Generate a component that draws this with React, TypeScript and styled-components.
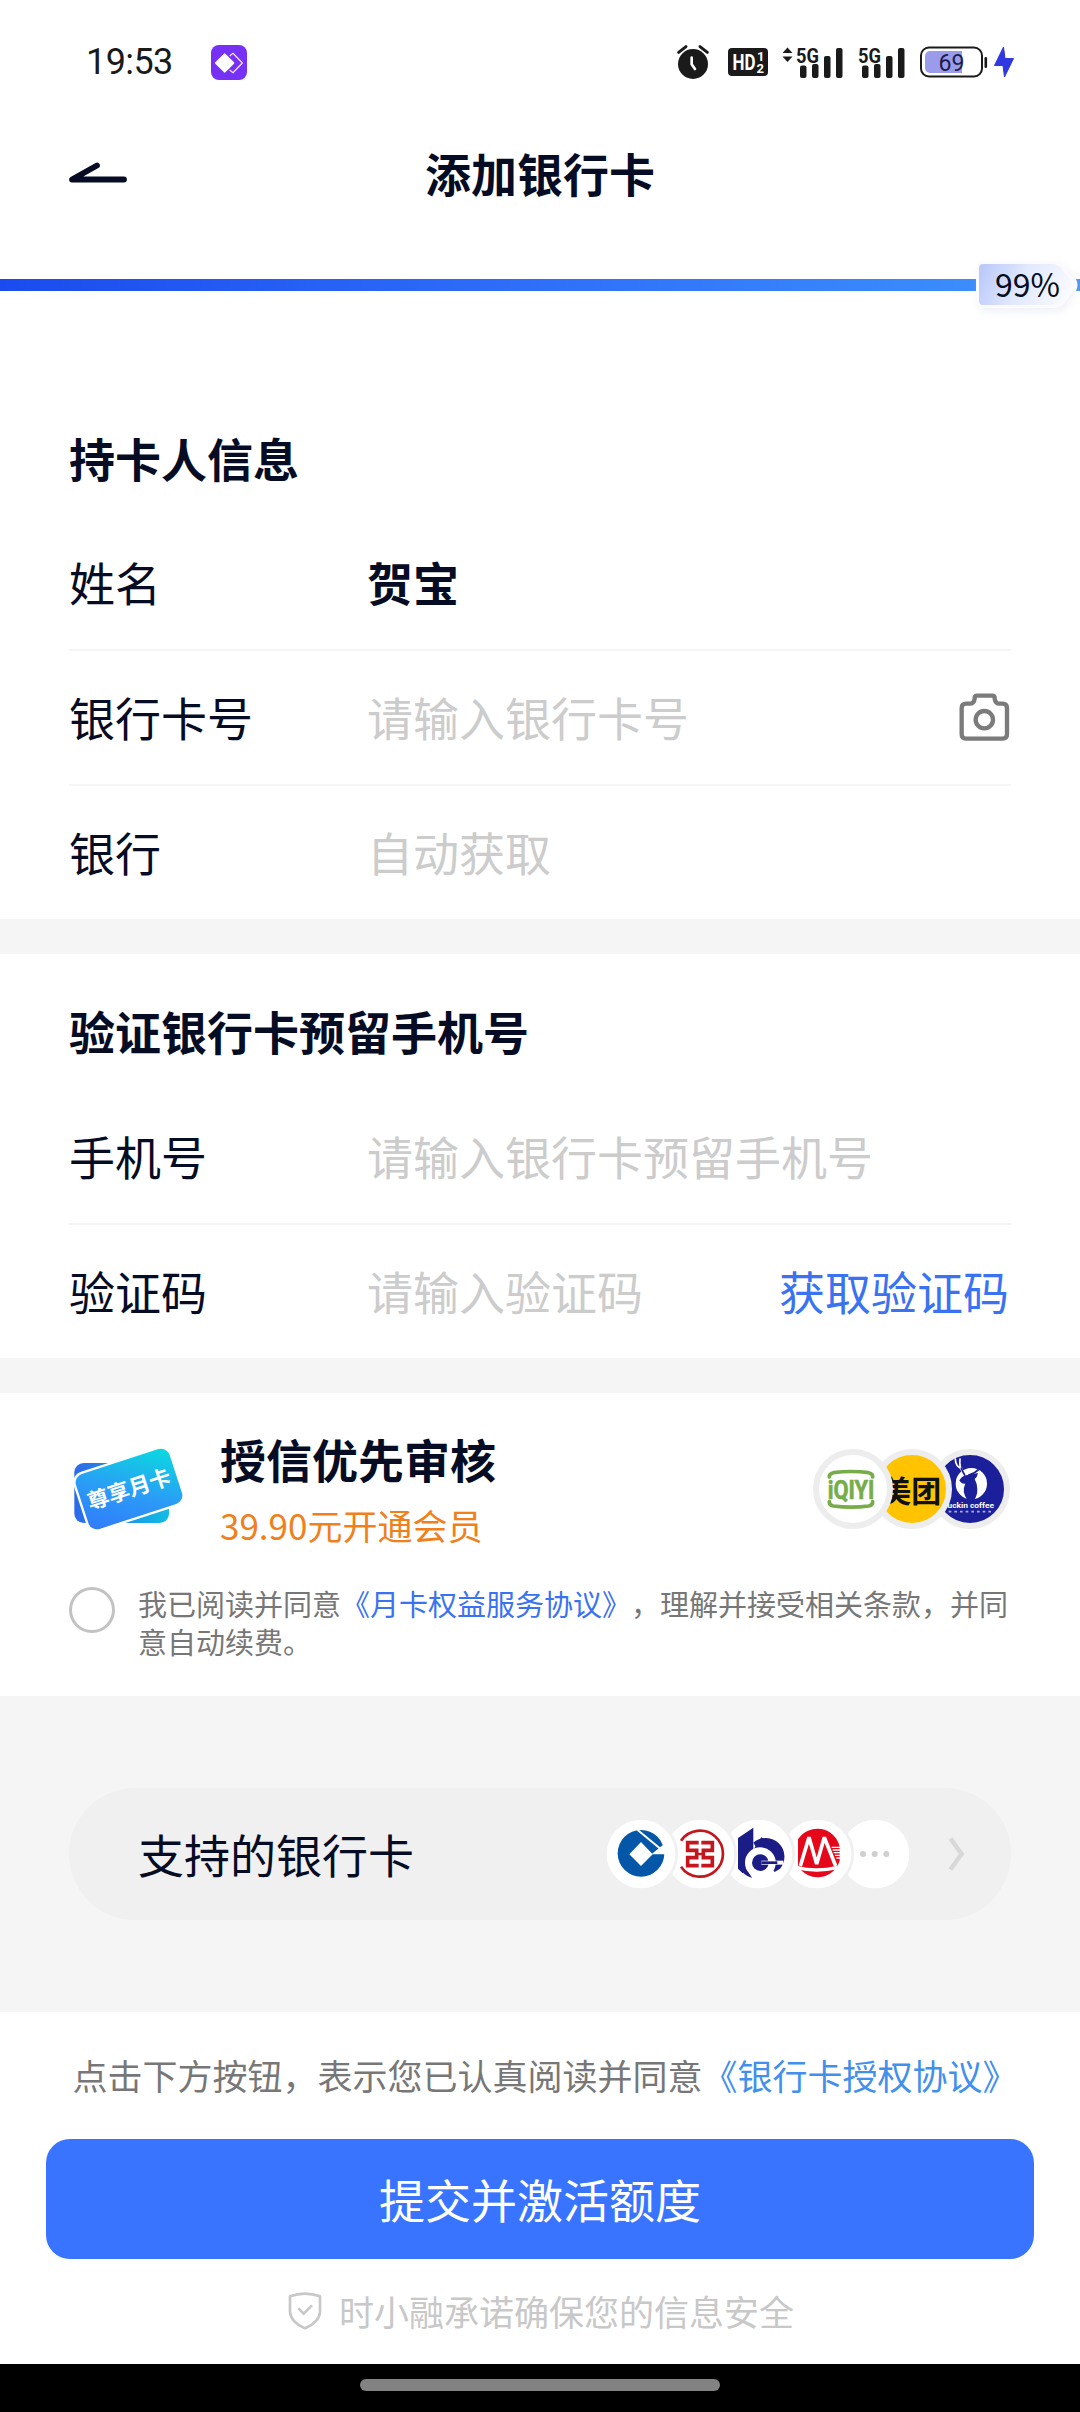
import React from 'react';
import styled, { createGlobalStyle } from 'styled-components';

const GlobalStyle = createGlobalStyle`
  * { box-sizing: border-box; }
  body {
    margin: 0;
    background: #fff;
    color: #060c24;
    font-family: "Noto Sans CJK SC", "Noto Sans", sans-serif;
    text-spacing-trim: space-all;
  }
  svg { display: block; flex: none; overflow: visible; }
`;

const Screen = styled.div`
  width: 1080px;
  height: 2412px;
  display: flex;
  flex-direction: column;
  overflow: hidden;
  background: #fff;
`;

const StatusBar = styled.header`
  height: 124px;
  flex: none;
  display: flex;
  align-items: center;
  justify-content: space-between;
  padding: 0 66px 0 86px;
`;

const StatusLeft = styled.div`
  display: flex;
  align-items: center;
`;

const Clock = styled.span`
  width: 125px;
  font: 400 36px/40px Roboto, sans-serif;
  letter-spacing: -0.6px;
  color: #1a1a1a;
`;

const StatusIcons = styled.div`
  display: flex;
  align-items: center;
`;

const Gap = styled.span<{ $w: number }>`
  width: ${(p) => p.$w}px;
`;

const TitleBar = styled.div`
  height: 97px;
  flex: none;
  display: grid;
  grid-template-columns: 200px 1fr 200px;
  align-items: center;
`;

const BackButton = styled.button`
  border: 0;
  background: none;
  padding: 0 0 0 69px;
`;

const PageTitle = styled.h1`
  margin: 0;
  padding-bottom: 1px;
  text-align: center;
  font-size: 46px;
  line-height: 60px;
  font-weight: 700;
`;

const ProgressArea = styled.div`
  height: 128px;
  flex: none;
  display: flex;
  align-items: center;
`;

const ProgressBar = styled.div`
  width: 976px;
  height: 12px;
  flex: none;
  background: linear-gradient(90deg, #1b4bee 0%, #2d6cf8 50%, #3b8dff 100%);
`;

const ProgressBadge = styled.div`
  width: 104px;
  height: 60px;
  flex: none;
  display: grid;

  > * { grid-area: 1 / 1; }
`;

const ProgressValue = styled.span`
  z-index: 1;
  padding: 0 0 4px 19px;
  align-self: center;
  font-size: 32px;
  line-height: 44px;
`;

const Section = styled.section<{ $top: number; $h: number; $gapAfter?: number }>`
  height: ${(p) => p.$h}px;
  flex: none;
  padding: ${(p) => p.$top}px 69px 0;
  box-sizing: content-box;
  width: 942px;
  border-bottom: ${(p) => p.$gapAfter ?? 0}px solid #f5f5f5;
`;

const SectionTitle = styled.h2<{ $mb?: number }>`
  margin: 0 0 ${(p) => p.$mb ?? 0}px;
  font-size: 46px;
  line-height: 60px;
  font-weight: 700;
`;

const Row = styled.div<{ $last?: boolean }>`
  height: ${(p) => (p.$last ? 133 : 135)}px;
  display: flex;
  align-items: center;
  padding-bottom: 3px;
  border-bottom: ${(p) => (p.$last ? 0 : 2)}px solid #f5f5f5;
  font-size: 46px;
  line-height: 60px;
`;

const Label = styled.span`
  width: 298px;
  flex: none;
`;

const Value = styled.span<{ $placeholder?: boolean }>`
  flex: 1;
  white-space: nowrap;
  color: ${(p) => (p.$placeholder ? '#cccccc' : '#060c24')};
  font-weight: ${(p) => (p.$placeholder ? 400 : 700)};
`;

const CodeLink = styled.span`
  margin-right: 2px;
  color: #3b72f2;
  white-space: nowrap;
`;

const MemberRow = styled.div`
  height: 122px;
  display: flex;
  align-items: center;
  padding: 0 1px 0 4px;
`;

const MemberText = styled.div`
  flex: 1;
  padding-left: 35px;
`;

const Price = styled.div`
  margin-top: 12px;
  font-size: 35px;
  line-height: 50px;
  color: #f07f1c;
`;

const BadgeStack = styled.div<{ $overlap: number }>`
  display: flex;
  flex-direction: row-reverse;
  flex: none;

  > * + * { margin-right: ${(p) => -p.$overlap}px; }
  > * { position: relative; }
`;

const AgreeRow = styled.div`
  display: flex;
  align-items: flex-start;
  margin-top: 34px;
`;

const Radio = styled.span`
  width: 46px;
  height: 46px;
  flex: none;
  margin: 3px 23px 0 0;
  border: 3px solid #c2c2c2;
  border-radius: 50%;
`;

const AgreeText = styled.p`
  margin: 0;
  width: 873px;
  font-size: 29px;
  line-height: 38px;
  color: #777;
`;

const Link = styled.span<{ $color: string }>`
  color: ${(p) => p.$color};
`;

const BankArea = styled.section`
  height: 316px;
  flex: none;
  padding: 92px 69px;
  background: #f5f5f5;
`;

const BankPill = styled.div`
  height: 132px;
  display: flex;
  align-items: center;
  padding: 0 44px 0 69px;
  border-radius: 66px;
  background: #f0f0f0;
  font-size: 46px;
  line-height: 60px;
`;

const BankLabel = styled.span`
  flex: 1;
  padding-bottom: 2px;
`;

const Footer = styled.footer`
  height: 352px;
  flex: none;
  padding: 38px 46px 0;
  display: flex;
  flex-direction: column;
`;

const FooterNote = styled.p`
  margin: 0;
  padding-left: 10px;
  text-align: center;
  white-space: nowrap;
  font-size: 35px;
  line-height: 50px;
  color: #777;
`;

const SubmitButton = styled.button`
  margin-top: 39px;
  height: 120px;
  flex: none;
  border: 0;
  border-radius: 24px;
  padding: 0 0 2px;
  background: #3874ff;
  color: #fff;
  font-family: inherit;
  font-size: 46px;
  line-height: 60px;
`;

const SafetyNote = styled.div`
  margin-top: 27px;
  padding-left: 2px;
  display: flex;
  align-items: center;
  justify-content: center;
  gap: 17px;
  font-size: 35px;
  line-height: 50px;
  color: #c8c8c8;
`;

const NavBar = styled.div`
  height: 48px;
  flex: none;
  padding-top: 15px;
  background: #000;
`;

const NavHandle = styled.div`
  width: 360px;
  height: 12px;
  margin: 0 auto;
  border-radius: 6px;
  background: #828282;
`;

const INK = '#1a1a1a';
const CJK = '"Noto Sans CJK SC", sans-serif';

const AppBadge = () => (
  <svg width="36" height="35" viewBox="0 0 108 105">
    <rect width="108" height="105" rx="24" fill="#7731f5" />
    <path d="M56 33l10-8 28 29-28 29-10-8" fill="none" stroke="#f3dcff" strokeWidth="4" strokeLinejoin="round" />
    <path d="M41 28l26 26-26 26-26-26z" fill="#fff" stroke="#fff" strokeWidth="6" strokeLinejoin="round" />
  </svg>
);

const AlarmIcon = () => (
  <svg width="32" height="36" viewBox="0 0 96 108">
    <circle cx="48" cy="60" r="45" fill={INK} />
    <path d="M5 25L27 8M69 8l22 17" stroke={INK} strokeWidth="9" strokeLinecap="round" />
    <path d="M44 41v20l10 14" fill="none" stroke="#fff" strokeWidth="8" strokeLinecap="round" />
  </svg>
);

const HdIcon = () => (
  <svg width="40" height="28" viewBox="0 0 40 28">
    <rect width="40" height="28" rx="4" fill={INK} />
    <text x="4.5" y="22" fontFamily="Roboto, sans-serif" fontWeight="700" fontSize="22" textLength="23" lengthAdjust="spacingAndGlyphs" fill="#fff">HD</text>
    <text x="29" y="13" fontFamily="Roboto, sans-serif" fontWeight="700" fontSize="13" fill="#fff">1</text>
    <text x="28.5" y="25" fontFamily="Roboto, sans-serif" fontWeight="700" fontSize="13" fill="#fff">2</text>
  </svg>
);

const SignalIcon = ({ arrows }: { arrows?: boolean }) => (
  <svg width={arrows ? 61 : 47} height="38" viewBox={arrows ? '-14 -4 61 38' : '0 -4 47 38'}>
    {arrows && <path d="M-13.500 6l5-5.500 5 5.500zM-13.500 9.500h10l-5 5.500z" fill={INK} />}
    <text x="0" y="15.500" fontFamily="Roboto, sans-serif" fontWeight="700" fontSize="21" textLength="23" lengthAdjust="spacingAndGlyphs" fill={INK}>5G</text>
    <rect x="4" y="18.500" width="6.500" height="12.500" rx="2" fill={INK} />
    <rect x="16" y="17" width="6.500" height="14" rx="2" fill={INK} />
    <rect x="28" y="9" width="6.500" height="22" rx="2" fill={INK} />
    <rect x="40" y="1" width="6.500" height="30" rx="2" fill={INK} />
  </svg>
);

const BatteryIcon = () => (
  <svg width="68" height="32" viewBox="0 0 68 32">
    <rect x="1" y="1.500" width="61" height="29" rx="8" fill="none" stroke={INK} strokeWidth="2" />
    <path d="M10 5H42V27H10a5 5 0 0 1-5-5V10a5 5 0 0 1 5-5z" fill="#9b9bec" />
    <rect x="64.500" y="11" width="2.600" height="11" rx="1.300" fill={INK} />
    <text x="18.500" y="25" fontFamily="Roboto, sans-serif" fontSize="24.500" textLength="26" lengthAdjust="spacingAndGlyphs" fill="#1d1d4a">69</text>
  </svg>
);

const BoltIcon = () => (
  <svg width="20" height="32" viewBox="0 0 20 32">
    <path d="M9.500 1L0.500 19.500H9L10.500 31 19.500 12.500H11z" fill="#3038e2" stroke="#3038e2" strokeLinejoin="round" />
  </svg>
);

const BackArrow = () => (
  <svg width="58" height="20" viewBox="0 0 58 20">
    <path d="M55 16.500H3L28 2.500" fill="none" stroke="#060c24" strokeWidth="5.800" strokeLinecap="round" strokeLinejoin="round" />
  </svg>
);

const BadgeShape = () => (
  <svg width="104" height="60" viewBox="0 0 104 60">
    <defs>
      <linearGradient id="badge" x1="0" y1="0.300" x2="1" y2="0.500">
        <stop offset="0" stopColor="#bccafa" />
        <stop offset="0.450" stopColor="#e0e8fc" />
        <stop offset="1" stopColor="#f9faff" />
      </linearGradient>
      <filter id="soft" x="-20%" y="-30%" width="140%" height="180%">
        <feGaussianBlur stdDeviation="5" />
      </filter>
    </defs>
    <path d="M4 12H82q5 0 8 4L102 30 90 50q-2 5-8 5H4z" fill="#b9c2dd" opacity="0.300" filter="url(#soft)" />
    <path d="M6 6H78q6 0 10 4L99 26q3 4 0 8L88 49q-4 4-10 4H6q-5 0-5-5V11q0-5 5-5z" fill="#fbfbff" />
    <path d="M7 9H76q5 0 9 4l11 14q2 2 0 4L85 46q-4 4-9 4H7q-4 0-4-4V13q0-4 4-4z" fill="url(#badge)" />
    <path d="M100 24h4v12h-4q3-6 0-12z" fill="#4f9aec" />
  </svg>
);

const CameraIcon = () => (
  <svg width="52" height="48" viewBox="0 0 156 144">
    <path
      d="M47 18q0-7 7-7h46q7 0 7 7v2q2 15 15 15h9q13 0 13 13v79q0 13-13 13H21q-13 0-13-13V48q0-13 13-13h11q13 0 15-15z"
      fill="none" stroke="#7b7b7b" strokeWidth="13" strokeLinejoin="round"
    />
    <circle cx="76" cy="83" r="26" fill="none" stroke="#7b7b7b" strokeWidth="13" />
  </svg>
);

const MonthCardIcon = () => (
  <svg width="112" height="84" viewBox="70 110 336 252">
    <defs>
      <linearGradient id="front" x1="0" y1="1" x2="1" y2="0">
        <stop offset="0" stopColor="#3278fb" />
        <stop offset="0.450" stopColor="#2b9bf6" />
        <stop offset="1" stopColor="#08dfdd" />
      </linearGradient>
      <linearGradient id="back" x1="0" y1="0" x2="1" y2="0">
        <stop offset="0" stopColor="#2d6ae8" />
        <stop offset="1" stopColor="#10bce4" />
      </linearGradient>
    </defs>
    <rect x="74" y="158" width="284" height="180" rx="28" fill="url(#back)" />
    <g transform="rotate(-18 238 236)">
      <rect x="87" y="146" width="302" height="180" rx="30" fill="url(#front)" stroke="#fff" strokeWidth="7" />
      <text x="238" y="260" textAnchor="middle" fontFamily={CJK} fontWeight="700" fontSize="65" fill="#fff">尊享月卡</text>
    </g>
  </svg>
);

const IqiyiBadge = () => (
  <svg width="80" height="80" viewBox="0 0 240 240">
    <circle cx="120" cy="120" r="111" fill="#fff" stroke="#ededed" strokeWidth="18" />
    <g fill="none" stroke="#77ad49" strokeWidth="11" strokeLinecap="round">
      <path d="M49 84q-1-10 12-13 55-7 106 0 13 3 12 13" />
      <path d="M49 158q-1 10 12 13 55 7 106 0 13-3 12-13" />
    </g>
    <text x="44" y="149" fontFamily="Roboto, sans-serif" fontWeight="700" fontSize="76" textLength="140" lengthAdjust="spacingAndGlyphs" fill="#77ad49" stroke="#77ad49" strokeWidth="2">iQIYI</text>
  </svg>
);

const MeituanBadge = () => (
  <svg width="80" height="80" viewBox="0 0 240 240">
    <circle cx="120" cy="120" r="111" fill="#ffc300" stroke="#ededed" strokeWidth="18" />
    <text x="28" y="160" fontFamily={CJK} fontWeight="700" fontSize="90" fill="#111">美团</text>
  </svg>
);

const LuckinBadge = () => (
  <svg width="80" height="80" viewBox="0 0 240 240">
    <circle cx="120" cy="120" r="111" fill="#1b1f99" stroke="#ededed" strokeWidth="18" />
    <circle cx="124" cy="104" r="47" fill="#fff" />
    <path d="M88 94Q98 78 114 78L144 72Q142 84 134 90 142 104 142 122 142 140 132 153L112 152Q94 128 106 104 94 106 88 94z" fill="#1b1f99" />
    <path d="M104 78Q86 58 90 30M96 60Q76 52 76 30" fill="none" stroke="#fff" strokeWidth="5" strokeLinecap="round" />
    <path d="M104 78Q98 68 94 58M116 78Q136 72 150 58" fill="none" stroke="#1b1f99" strokeWidth="5" strokeLinecap="round" />
    <text x="46" y="177" fontFamily="Roboto, sans-serif" fontWeight="700" fontSize="24" textLength="146" lengthAdjust="spacingAndGlyphs" fill="#fff">luckin coffee</text>
    <path d="M56 188H190" stroke="#a9addf" strokeWidth="5" strokeDasharray="8 9" />
  </svg>
);

const BankDisc = ({ children }: { children?: React.ReactNode }) => (
  <svg width="74" height="74" viewBox="-111 -111 222 222">
    <circle r="107" fill="#fff" stroke="#f0f0f0" strokeWidth="8" />
    {children}
  </svg>
);

const CcbLogo = () => (
  <BankDisc>
    <circle cx="0" cy="-2" r="70" fill="#0457a8" />
    <path d="M-35 1L0-36 35 1 0 36z" fill="#fff" />
    <path d="M33-1L74-34V1H34z" fill="#fff" />
    <path d="M-10-72L58-16" stroke="#fff" strokeWidth="6" />
  </BankDisc>
);

const IcbcLogo = () => (
  <BankDisc>
    <path d="M-57-40A69 69 0 1 1-57 38" fill="none" stroke="#c5161d" strokeWidth="8" />
    <g fill="none" stroke="#c5161d" strokeWidth="11">
      <path d="M-4-34H-37V-11H-10V11H-37V35H-4" />
      <path d="M4-34H37V-11H10V11H37V35H4" />
      <path d="M-10 0H10" strokeWidth="7" />
    </g>
  </BankDisc>
);

const BocomLogo = () => (
  <BankDisc>
    <path d="M-60-48L-14-79V10L-46 58-60 44z" fill="#1c1c86" />
    <path d="M-58 38Q-44 64-18 72L-34 44z" fill="#1c1c86" />
    <path d="M-14-34A56 56 0 0 1 66 44L50 54 20 20z" fill="#1c1c86" />
    <path d="M-16-10L10-50 40-30V10z" fill="#1c1c86" />
    <circle cx="7" cy="26" r="46" fill="#fff" />
    <circle cx="7" cy="26" r="25" fill="#1c1c86" />
    <path d="M10 20H76V32H10z" fill="#fff" />
    <path d="M10 26H58" stroke="#1c1c86" strokeWidth="8" />
  </BankDisc>
);

const CmbLogo = () => (
  <BankDisc>
    <path d="M-57-44A69 70 0 0 1 68-22V20A69 70 0 0 1-57 36z" fill="#e4081a" />
    <path d="M-50 36L-24-50 -1 30 22-50 56 36" fill="none" stroke="#fff" strokeWidth="11" strokeLinejoin="bevel" />
    <path d="M-62 40q60 16 124 0" fill="none" stroke="#fff" strokeWidth="10" />
    <path d="M44-20H74M47-12H74M50-4H74M54 4H74M58 12H74" stroke="#fff" strokeWidth="4" />
  </BankDisc>
);

const MoreDisc = () => (
  <BankDisc>
    <g fill="#cfcfcf">
      <circle cx="-36" cy="0" r="9" />
      <circle cx="-1" cy="0" r="9" />
      <circle cx="34" cy="0" r="9" />
    </g>
  </BankDisc>
);

const Chevron = () => (
  <svg width="20" height="36" viewBox="0 0 20 36">
    <path d="M3.500 2.500L14.500 18 3.500 33.500" fill="none" stroke="#d8d8d8" strokeWidth="4.500" />
  </svg>
);

const ShieldIcon = () => (
  <svg width="34" height="38" viewBox="0 0 102 114">
    <path d="M51 5Q74 5 96 13V60Q94 90 51 109 8 90 6 60V13Q28 5 51 5z" fill="none" stroke="#c8c8c8" strokeWidth="8" strokeLinejoin="round" />
    <path d="M31 49L47 65 72 40" fill="none" stroke="#c8c8c8" strokeWidth="8" />
  </svg>
);

type Field = { label: string; text: string; filled?: boolean; trailing?: React.ReactNode };

const holderFields: Field[] = [
  { label: '姓名', text: '贺宝', filled: true },
  { label: '银行卡号', text: '请输入银行卡号', trailing: <CameraIcon /> },
  { label: '银行', text: '自动获取' },
];

const phoneFields: Field[] = [
  { label: '手机号', text: '请输入银行卡预留手机号' },
  { label: '验证码', text: '请输入验证码', trailing: <CodeLink>获取验证码</CodeLink> },
];

const FieldList = ({ fields }: { fields: Field[] }) => (
  <>
    {fields.map((f, i) => (
      <Row key={f.label} $last={i === fields.length - 1}>
        <Label>{f.label}</Label>
        <Value $placeholder={!f.filled}>{f.text}</Value>
        {f.trailing}
      </Row>
    ))}
  </>
);

export default function App() {
  return (
    <Screen>
      <GlobalStyle />
      <StatusBar>
        <StatusLeft>
          <Clock>19:53</Clock>
          <AppBadge />
        </StatusLeft>
        <StatusIcons>
          <AlarmIcon />
          <Gap $w={19} />
          <HdIcon />
          <Gap $w={14} />
          <SignalIcon arrows />
          <Gap $w={15} />
          <SignalIcon />
          <Gap $w={15} />
          <BatteryIcon />
          <Gap $w={6} />
          <BoltIcon />
        </StatusIcons>
      </StatusBar>

      <TitleBar>
        <BackButton aria-label="返回">
          <BackArrow />
        </BackButton>
        <PageTitle>添加银行卡</PageTitle>
      </TitleBar>

      <ProgressArea>
        <ProgressBar />
        <ProgressBadge>
          <BadgeShape />
          <ProgressValue>99%</ProgressValue>
        </ProgressBadge>
      </ProgressArea>

      <Section $top={78} $h={492} $gapAfter={35}>
        <SectionTitle $mb={29}>持卡人信息</SectionTitle>
        <FieldList fields={holderFields} />
      </Section>

      <Section $top={46} $h={358} $gapAfter={35}>
        <SectionTitle $mb={30}>验证银行卡预留手机号</SectionTitle>
        <FieldList fields={phoneFields} />
      </Section>

      <Section $top={35} $h={268}>
        <MemberRow>
          <MonthCardIcon />
          <MemberText>
            <SectionTitle>授信优先审核</SectionTitle>
            <Price>39.90元开通会员</Price>
          </MemberText>
          <BadgeStack $overlap={21.5}>
            <LuckinBadge />
            <MeituanBadge />
            <IqiyiBadge />
          </BadgeStack>
        </MemberRow>
        <AgreeRow>
          <Radio />
          <AgreeText>
            我已阅读并同意<Link $color="#3b72f2">《月卡权益服务协议》</Link>，理解并接受相关条款，并同意自动续费。
          </AgreeText>
        </AgreeRow>
      </Section>

      <BankArea>
        <BankPill>
          <BankLabel>支持的银行卡</BankLabel>
          <BadgeStack $overlap={15.5}>
            <MoreDisc />
            <CmbLogo />
            <BocomLogo />
            <IcbcLogo />
            <CcbLogo />
          </BadgeStack>
          <Gap $w={35} />
          <Chevron />
        </BankPill>
      </BankArea>

      <Footer>
        <FooterNote>
          点击下方按钮，表示您已认真阅读并同意<Link $color="#4290ec">《银行卡授权协议》</Link>
        </FooterNote>
        <SubmitButton>提交并激活额度</SubmitButton>
        <SafetyNote>
          <ShieldIcon />
          <span>时小融承诺确保您的信息安全</span>
        </SafetyNote>
      </Footer>

      <NavBar>
        <NavHandle />
      </NavBar>
    </Screen>
  );
}
